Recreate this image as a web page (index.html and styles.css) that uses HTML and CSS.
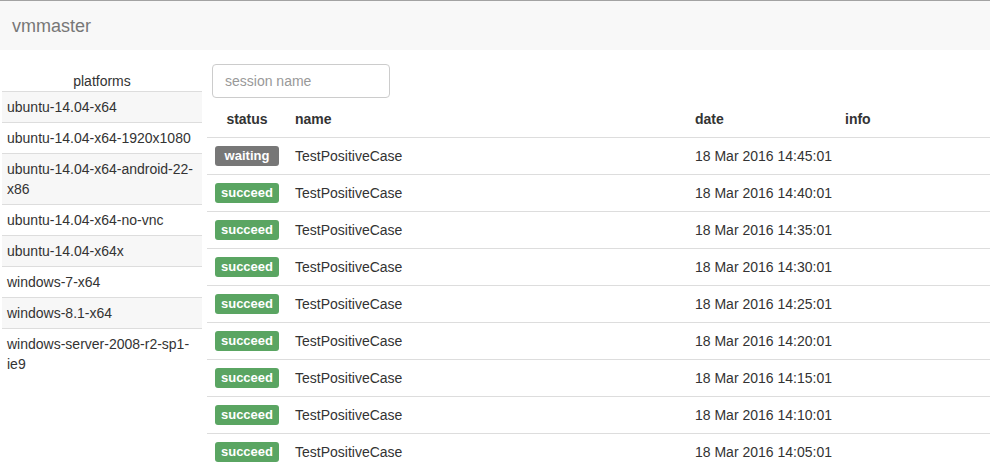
FILE: index.html
```html
<!DOCTYPE html>
<html>
<head>
<meta charset="utf-8">
<link rel="stylesheet" href="styles.css">
</head>
<body>
<nav class="navbar"><span class="brand">vmmaster</span></nav>
<div class="content">
  <aside class="sidebar">
    <table class="platforms">
      <thead><tr><th>platforms</th></tr></thead>
      <tbody>
        <tr><td>ubuntu-14.04-x64</td></tr>
        <tr><td>ubuntu-14.04-x64-1920x1080</td></tr>
        <tr><td>ubuntu-14.04-x64-android-22-x86</td></tr>
        <tr><td>ubuntu-14.04-x64-no-vnc</td></tr>
        <tr><td>ubuntu-14.04-x64x</td></tr>
        <tr><td>windows-7-x64</td></tr>
        <tr><td>windows-8.1-x64</td></tr>
        <tr><td>windows-server-2008-r2-sp1-ie9</td></tr>
      </tbody>
    </table>
  </aside>
  <main class="main">
    <input class="search" type="text" placeholder="session name">
    <table class="sessions">
      <thead>
        <tr><th class="c-status">status</th><th class="c-name">name</th><th class="c-date">date</th><th class="c-info">info</th></tr>
      </thead>
      <tbody>
        <tr><td><span class="label waiting">waiting</span></td><td>TestPositiveCase</td><td>18 Mar 2016 14:45:01</td><td></td></tr>
        <tr><td><span class="label ok">succeed</span></td><td>TestPositiveCase</td><td>18 Mar 2016 14:40:01</td><td></td></tr>
        <tr><td><span class="label ok">succeed</span></td><td>TestPositiveCase</td><td>18 Mar 2016 14:35:01</td><td></td></tr>
        <tr><td><span class="label ok">succeed</span></td><td>TestPositiveCase</td><td>18 Mar 2016 14:30:01</td><td></td></tr>
        <tr><td><span class="label ok">succeed</span></td><td>TestPositiveCase</td><td>18 Mar 2016 14:25:01</td><td></td></tr>
        <tr><td><span class="label ok">succeed</span></td><td>TestPositiveCase</td><td>18 Mar 2016 14:20:01</td><td></td></tr>
        <tr><td><span class="label ok">succeed</span></td><td>TestPositiveCase</td><td>18 Mar 2016 14:15:01</td><td></td></tr>
        <tr><td><span class="label ok">succeed</span></td><td>TestPositiveCase</td><td>18 Mar 2016 14:10:01</td><td></td></tr>
        <tr><td><span class="label ok">succeed</span></td><td>TestPositiveCase</td><td>18 Mar 2016 14:05:01</td><td></td></tr>
      </tbody>
    </table>
  </main>
</div>
</body>
</html>
```
FILE: styles.css
```css
html, body {
  margin: 0;
  padding: 0;
  background: #fff;
}
body {
  font-family: "Liberation Sans", Arial, sans-serif;
  font-size: 14px;
  line-height: 20px;
  color: #333;
  overflow: hidden;
}
.navbar {
  height: 49px;
  border-top: 1px solid #a3a3a3;
  background: #f8f8f8;
  display: flex;
  align-items: center;
  padding-left: 12px;
}
.brand {
  font-size: 18px;
  line-height: 20px;
  color: #777;
}
.content {
  display: flex;
  align-items: flex-start;
  gap: 5px;
}
.sidebar {
  width: 200px;
  margin-left: 2px;
  margin-top: 20px;
  flex: none;
}
table {
  border-collapse: collapse;
  border-spacing: 0;
}
.platforms {
  width: 100%;
  table-layout: fixed;
}
.platforms th {
  font-weight: normal;
  text-align: center;
  padding: 1px 5px 0;
}
.platforms td {
  padding: 5px;
  border-top: 1px solid #ddd;
}
.platforms tbody tr:nth-child(odd) td {
  background: #f7f7f7;
}
.main {
  flex: 1;
  min-width: 0;
  padding-top: 14px;
}
.search {
  display: block;
  box-sizing: border-box;
  width: 178px;
  height: 34px;
  margin: 0 0 3px 5px;
  padding: 6px 12px;
  border: 1px solid #ccc;
  border-radius: 4px;
  font-family: inherit;
  font-size: 14px;
  color: #555;
  outline: none;
}
.search::placeholder {
  color: #999;
}
.sessions {
  width: 100%;
  table-layout: fixed;
}
.sessions th {
  font-weight: bold;
  text-align: left;
  padding: 8px;
  border-bottom: 1px solid #ddd;
}
.sessions th.c-status {
  text-align: center;
  width: 64px;
}
.sessions th.c-name { width: 384px; }
.sessions th.c-date { width: 134px; }
.sessions td {
  padding: 8px;
  border-top: 1px solid #ddd;
  white-space: nowrap;
  height: 20px;
}
.sessions tbody tr:first-child td {
  border-top: 0;
}
.label {
  display: inline-block;
  width: 64px;
  height: 20px;
  box-sizing: border-box;
  padding: 3px 0 4px;
  font-size: 13px;
  line-height: 13px;
  font-weight: bold;
  color: #fff;
  text-align: center;
  border-radius: 3px;
  vertical-align: top;
}
.label.waiting { background: #777; }
.label.ok { background: #5aa562; }
```
